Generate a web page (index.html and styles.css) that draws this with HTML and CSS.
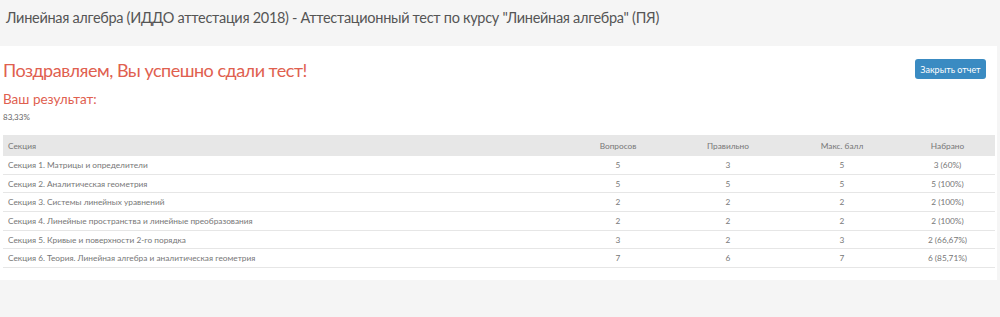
FILE: index.html
```html
<!DOCTYPE html>
<html lang="ru">
<head>
<meta charset="utf-8">
<link rel="stylesheet" href="styles.css">
</head>
<body>
<div class="page-title">Линейная алгебра (ИДДО аттестация 2018) - Аттестационный тест по курсу "Линейная алгебра" (ПЯ)</div>
<div class="panel">
  <div class="head">
    <h2 class="congrats">Поздравляем, Вы успешно сдали тест!</h2>
    <button class="btn">Закрыть отчет</button>
  </div>
  <h3 class="result-title">Ваш результат:</h3>
  <div class="score">83,33%</div>
  <table class="results">
    <thead>
      <tr><th class="c-sec">Секция</th><th class="c-q">Вопросов</th><th class="c-r">Правильно</th><th class="c-m">Макс. балл</th><th class="c-s">Набрано</th></tr>
    </thead>
    <tbody>
      <tr><td>Секция 1. Матрицы и определители</td><td>5</td><td>3</td><td>5</td><td>3 (60%)</td></tr>
      <tr><td>Секция 2. Аналитическая геометрия</td><td>5</td><td>5</td><td>5</td><td>5 (100%)</td></tr>
      <tr><td>Секция 3. Системы линейных уравнений</td><td>2</td><td>2</td><td>2</td><td>2 (100%)</td></tr>
      <tr><td>Секция 4. Линейные пространства и линейные преобразования</td><td>2</td><td>2</td><td>2</td><td>2 (100%)</td></tr>
      <tr><td>Секция 5. Кривые и поверхности 2-го порядка</td><td>3</td><td>2</td><td>3</td><td>2 (66,67%)</td></tr>
      <tr><td>Секция 6. Теория. Линейная алгебра и аналитическая геометрия</td><td>7</td><td>6</td><td>7</td><td>6 (85,71%)</td></tr>
    </tbody>
  </table>
</div>
</body>
</html>
```
FILE: styles.css
```css
html, body {
  margin: 0;
  padding: 0;
  background: #f5f5f5;
  font-family: Lato, "Liberation Sans", sans-serif;
  width: 1000px;
  height: 317px;
  overflow: hidden;
}
.page-title {
  height: 46px;
  box-sizing: border-box;
  padding: 8px 0 0 6px;
  font-size: 14.5px;
  letter-spacing: -0.3px;
  color: #555;
  line-height: 20px;
}
.panel {
  background: #fff;
  width: 997px;
  box-sizing: border-box;
  padding: 11px 2px 12px 3px;
}
.head {
  display: flex;
  justify-content: space-between;
  align-items: flex-start;
}
.congrats {
  margin: 1px 0 0 0;
  font-weight: normal;
  font-size: 18px;
  letter-spacing: -0.5px;
  line-height: 24px;
  color: #e0604f;
}
.btn {
  margin: 2px 9px 0 0;
  background: #3a8bc2;
  color: #fff;
  border: none;
  border-radius: 3px;
  font-family: Lato, "Liberation Sans", sans-serif;
  font-size: 9px;
  height: 20px;
  width: 71px;
  padding: 0;
}
.result-title {
  margin: 8px 0 0 0;
  font-weight: normal;
  font-size: 13.5px;
  line-height: 18px;
  color: #e0604f;
}
.score {
  font-size: 8px;
  color: #666;
  line-height: 12px;
  margin-top: 3px;
}
.results {
  margin-top: 12px;
  width: 992px;
  border-collapse: collapse;
  table-layout: fixed;
  font-size: 8.3px;
  color: #777;
}
.results th {
  background: #e7e7e7;
  font-weight: normal;
  height: 21px;
  padding: 0 5px;
}
.results td {
  height: 17.7px;
  padding: 0 5px;
  border-bottom: 1px solid #e6e6e6;
  text-align: center;
}
.results td:first-child, .results th.c-sec { text-align: left; }
.c-sec { width: 551px; }
.c-q { width: 98px; }
.c-r { width: 102px; }
.c-m { width: 106px; }
.c-s { width: 85px; }
```
